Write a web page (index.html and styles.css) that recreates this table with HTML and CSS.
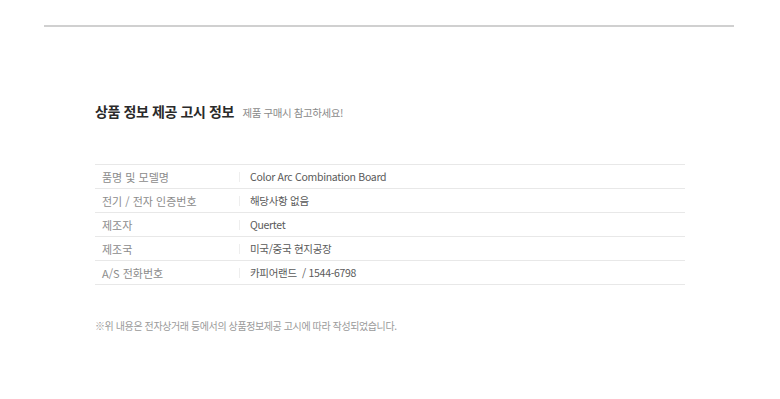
FILE: index.html
```html
<!DOCTYPE html>
<html lang="ko">
<head>
<meta charset="utf-8">
<link rel="stylesheet" href="styles.css">
</head>
<body>
<div class="page">
  <hr class="top-rule">
  <section class="notice">
    <h2 class="title">상품 정보 제공 고시 정보 <span class="sub">제품 구매시 참고하세요!</span></h2>
    <table class="info">
      <tr><th>품명 및 모델명</th><td>Color Arc Combination Board</td></tr>
      <tr><th>전기 / 전자 인증번호</th><td>해당사항 없음</td></tr>
      <tr><th>제조자</th><td>Quertet</td></tr>
      <tr><th>제조국</th><td>미국/중국 현지공장</td></tr>
      <tr><th>A/S 전화번호</th><td>카피어랜드 &nbsp;/ 1544-6798</td></tr>
    </table>
    <p class="foot">※위 내용은 전자상거래 등에서의 상품정보제공 고시에 따라 작성되었습니다.</p>
  </section>
</div>
</body>
</html>
```
FILE: styles.css
```css
html, body { margin: 0; padding: 0; background: #fff; }
body { font-family: "Noto Sans CJK KR", "Noto Sans", sans-serif; color: #666; }
.page { width: 780px; height: 399px; overflow: hidden; }
.top-rule { margin: 25px 46px 0 44px; border: 0; border-top: 2px solid #d0d0d0; height: 0; }
.notice { padding: 0 95px; }
.title { margin: 73px 0 0 0; font-size: 14px; font-weight: 700; color: #2a2a2a; line-height: 22px; letter-spacing: -0.4px; }
.title .sub { font-size: 10.5px; font-weight: 400; color: #8a8a8a; margin-left: 5px; letter-spacing: -0.4px; }
.info { margin-top: 40px; width: 590px; border-collapse: collapse; font-size: 10.5px; }
.info tr { border-top: 1px solid #e8e8e8; border-bottom: 1px solid #e8e8e8; }
.info th, .info td { height: 23px; padding: 0; text-align: left; font-weight: 400; vertical-align: middle; }
.info th { width: 138px; padding-left: 7px; color: #8c8c8c; position: relative; font-size: 11px; }
.info th::after { content: ""; position: absolute; right: 0; top: 7px; height: 10px; border-right: 1px solid #eee; }
.info td { padding-left: 10px; color: #5a5a5a; letter-spacing: -0.3px; }
.foot { margin: 33px 0 0 0; font-size: 10px; color: #9a9a9a; letter-spacing: -0.4px; }
```
